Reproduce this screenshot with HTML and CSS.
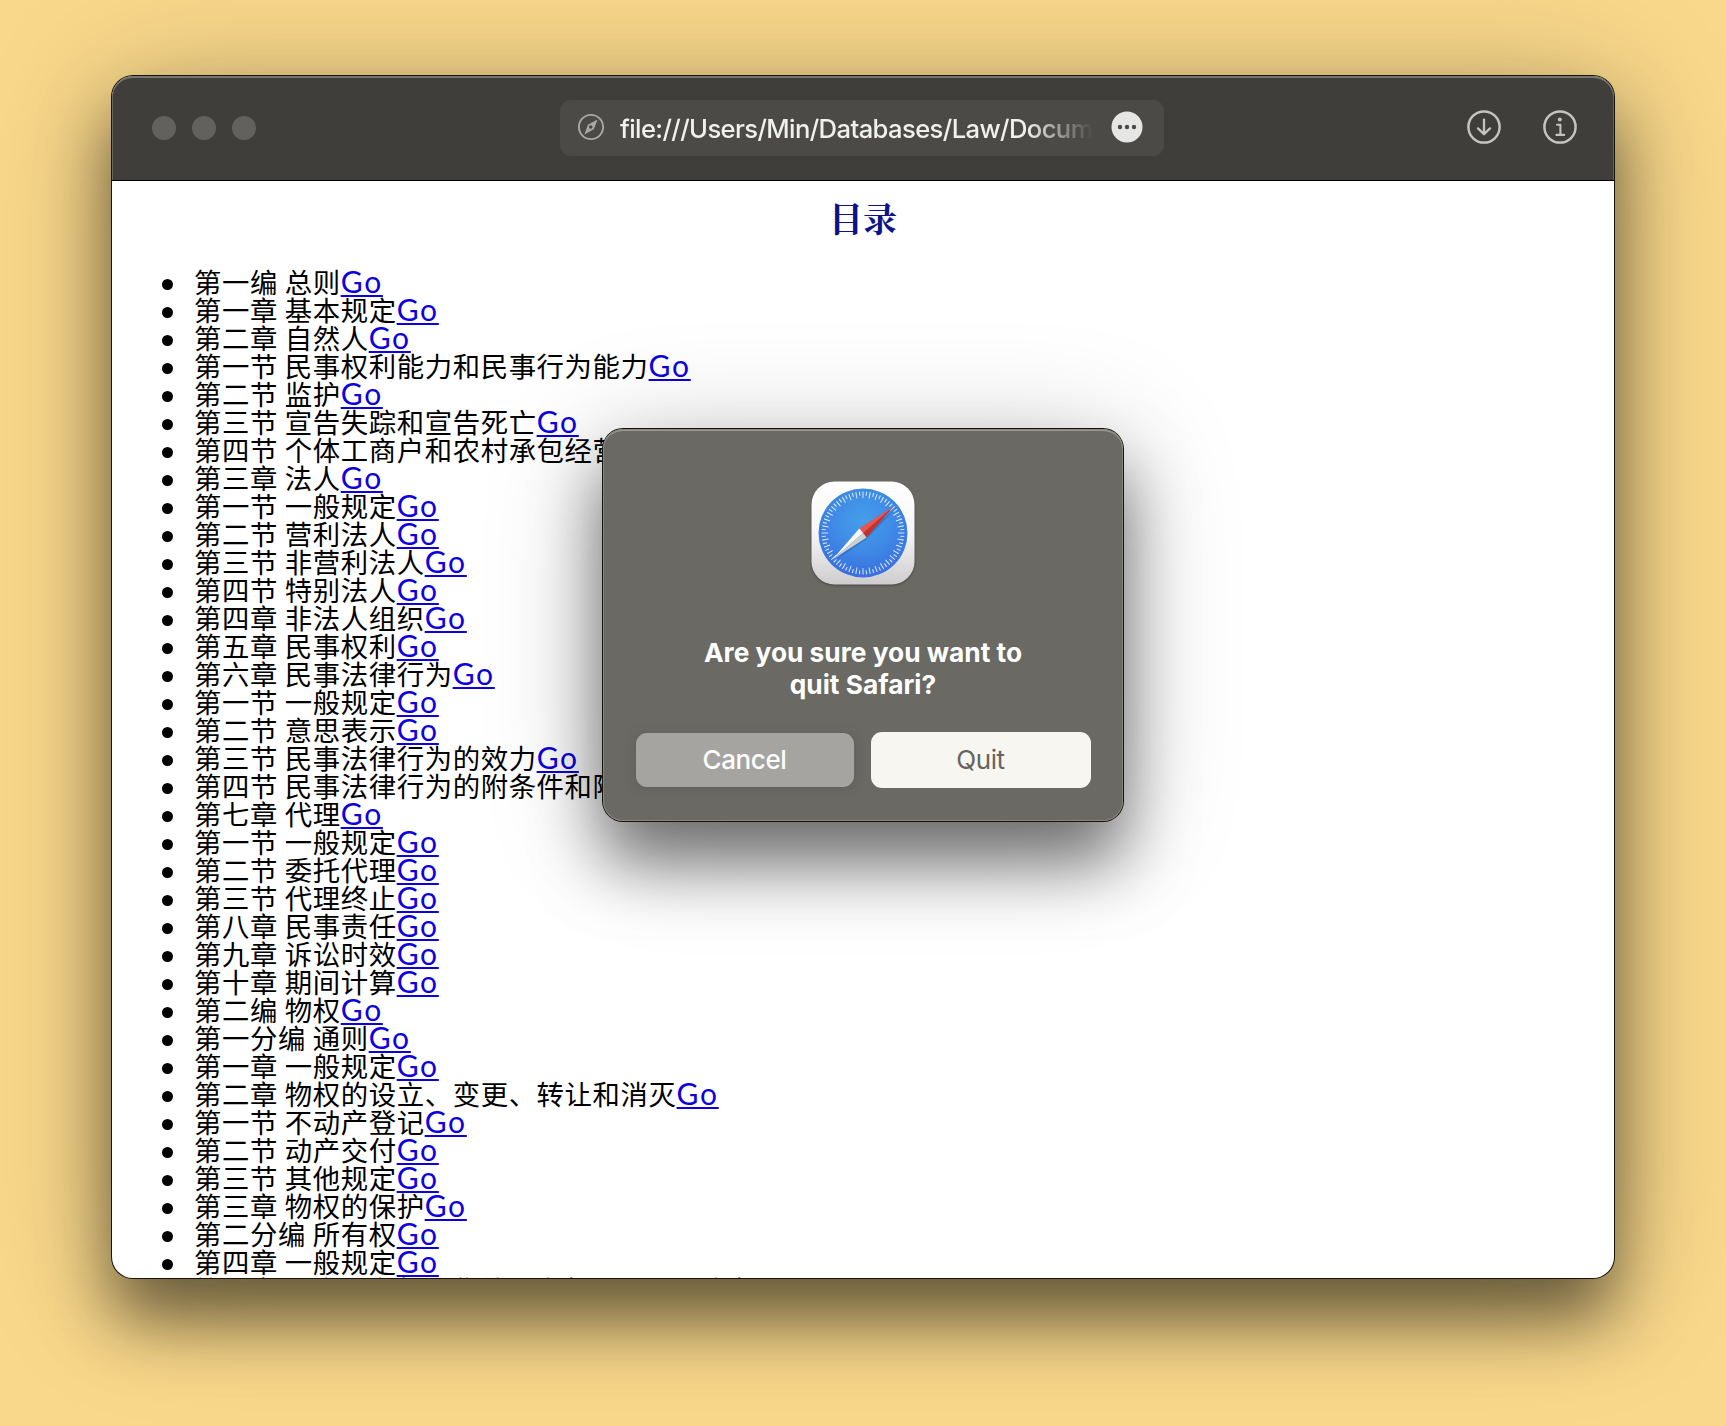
FILE: index.html
```html
<!DOCTYPE html>
<html lang="zh-CN">
<head>
<meta charset="utf-8">
<title>目录</title>
<link rel="stylesheet" href="styles.css">
</head>
<body>
<main class="window">
  <header class="toolbar">
    <div class="lights"><i></i><i></i><i></i></div>
    <div class="address">
      <svg class="compass" viewBox="0 0 28 28" width="28" height="28"><circle cx="14" cy="14" r="12.1" fill="none" stroke="currentColor" stroke-width="1.9"/><path fill="currentColor" fill-rule="evenodd" d="M20.6 6.4 10.9 11.7 7.4 21.6 16.8 16.2ZM13.7 12.2a1.8 1.8 0 1 1 0 3.6 1.8 1.8 0 0 1 0-3.6Z"/></svg>
      <span class="url">file:///Users/Min/Databases/Law/Docum</span>
      <svg class="more" viewBox="0 0 32 32" width="32" height="32"><circle cx="16" cy="16" r="15.5" fill="#e6e6e5"/><g fill="#4b4a46"><circle cx="9" cy="16" r="2.2"/><circle cx="16" cy="16" r="2.2"/><circle cx="23" cy="16" r="2.2"/></g></svg>
    </div>
    <div class="actions">
      <svg viewBox="0 0 36 36" width="36" height="36" fill="none" stroke="currentColor" stroke-width="2.5"><circle cx="18" cy="18" r="15.6"/><path stroke-width="2.3" stroke-linecap="round" stroke-linejoin="round" d="M18 10.6V25M12 19.4l6 5.8 6-5.8"/></svg>
      <svg viewBox="0 0 36 36" width="36" height="36" fill="none" stroke="currentColor" stroke-width="2.5"><circle cx="18" cy="18" r="15.6"/><circle cx="17.8" cy="10.4" r="2" fill="currentColor" stroke="none"/><path stroke-width="2.1" stroke-linecap="round" stroke-linejoin="round" d="M15 15.7h3.4v10M14.4 25.9h7.8"/></svg>
    </div>
  </header>
  <section class="page">
    <h1>目录</h1>
    <ul class="toc">
      <li>第一编 总则<a href="#">Go</a></li>
      <li>第一章 基本规定<a href="#">Go</a></li>
      <li>第二章 自然人<a href="#">Go</a></li>
      <li>第一节 民事权利能力和民事行为能力<a href="#">Go</a></li>
      <li>第二节 监护<a href="#">Go</a></li>
      <li>第三节 宣告失踪和宣告死亡<a href="#">Go</a></li>
      <li>第四节 个体工商户和农村承包经营户<a href="#">Go</a></li>
      <li>第三章 法人<a href="#">Go</a></li>
      <li>第一节 一般规定<a href="#">Go</a></li>
      <li>第二节 营利法人<a href="#">Go</a></li>
      <li>第三节 非营利法人<a href="#">Go</a></li>
      <li>第四节 特别法人<a href="#">Go</a></li>
      <li>第四章 非法人组织<a href="#">Go</a></li>
      <li>第五章 民事权利<a href="#">Go</a></li>
      <li>第六章 民事法律行为<a href="#">Go</a></li>
      <li>第一节 一般规定<a href="#">Go</a></li>
      <li>第二节 意思表示<a href="#">Go</a></li>
      <li>第三节 民事法律行为的效力<a href="#">Go</a></li>
      <li>第四节 民事法律行为的附条件和附期限<a href="#">Go</a></li>
      <li>第七章 代理<a href="#">Go</a></li>
      <li>第一节 一般规定<a href="#">Go</a></li>
      <li>第二节 委托代理<a href="#">Go</a></li>
      <li>第三节 代理终止<a href="#">Go</a></li>
      <li>第八章 民事责任<a href="#">Go</a></li>
      <li>第九章 诉讼时效<a href="#">Go</a></li>
      <li>第十章 期间计算<a href="#">Go</a></li>
      <li>第二编 物权<a href="#">Go</a></li>
      <li>第一分编 通则<a href="#">Go</a></li>
      <li>第一章 一般规定<a href="#">Go</a></li>
      <li>第二章 物权的设立、变更、转让和消灭<a href="#">Go</a></li>
      <li>第一节 不动产登记<a href="#">Go</a></li>
      <li>第二节 动产交付<a href="#">Go</a></li>
      <li>第三节 其他规定<a href="#">Go</a></li>
      <li>第三章 物权的保护<a href="#">Go</a></li>
      <li>第二分编 所有权<a href="#">Go</a></li>
      <li>第四章 一般规定<a href="#">Go</a></li>
      <li>第五章 国家所有权和集体所有权、私人所有权<a href="#">Go</a></li>
    </ul>
  </section>
</main>

<div class="dialog" role="alertdialog">
  <svg class="app-icon" viewBox="0 0 104 104" width="104" height="104">
    <defs>
      <linearGradient id="plate" x1="0" y1="0" x2="0" y2="1"><stop offset="0" stop-color="#fff"/><stop offset=".5" stop-color="#f6f6f6"/><stop offset="1" stop-color="#cfcccd"/></linearGradient>
      <linearGradient id="rim" x1="0" y1="0" x2="0" y2="1"><stop offset="0" stop-color="#3c8fd6"/><stop offset="1" stop-color="#3a70e4"/></linearGradient>
      <radialGradient id="dial" cx=".5" cy=".35" r=".65"><stop offset="0" stop-color="#459fea"/><stop offset=".55" stop-color="#3f8ae6"/><stop offset="1" stop-color="#3a6fdf"/></radialGradient>
    </defs>
    <rect x=".5" y=".5" width="103" height="103" rx="23" fill="url(#plate)"/>
    <circle cx="52" cy="52" r="44.5" fill="url(#rim)"/>
    <circle cx="52" cy="52" r="43" fill="url(#dial)"/>
    <g fill="none" stroke="#e8f3fd" stroke-opacity=".88">
      <circle cx="52" cy="52" r="38.2" stroke-width="6.4" pathLength="360" stroke-dasharray="1.6 8.4" stroke-dashoffset=".8"/>
      <circle cx="52" cy="52" r="39.4" stroke-width="4" pathLength="360" stroke-dasharray="1.6 8.4" stroke-dashoffset="5.8"/>
    </g>
    <path d="M85 27 55.8 58 23 80Z" fill="#174a9c" opacity=".35"/>
    <path d="M82.5 25.5 48.3 47.5 52 52Z" fill="#ef5248"/>
    <path d="M82.5 25.5 55.6 56.5 52 52Z" fill="#c4322d"/>
    <path d="M21.5 78.5 48.3 47.5 52 52Z" fill="#fbfafa"/>
    <path d="M21.5 78.5 55.6 56.5 52 52Z" fill="#cfcfd1"/>
  </svg>
  <p class="message">Are you sure you want to<br>quit Safari?</p>
  <div class="buttons">
    <button class="cancel">Cancel</button>
    <button class="quit">Quit</button>
  </div>
</div>
</body>
</html>
```
FILE: styles.css
```css
* { box-sizing: border-box; }

body {
  margin: 0;
  width: 1726px;
  height: 1426px;
  overflow: hidden;
  background: #f9d88b;
  padding: 76px 112px 0;
  font-family: Inter, "Noto Sans CJK SC", sans-serif;
}

.window {
  width: 1502px;
  height: 1202px;
  display: flex;
  flex-direction: column;
  overflow: hidden;
  border-radius: 21px;
  background: #fff;
  box-shadow: 0 0 0 1px #17130a, 0 42px 66px rgba(0, 0, 0, .5), 0 14px 130px rgba(0, 0, 0, .25);
}

.toolbar {
  flex: none;
  height: 105px;
  display: grid;
  grid-template-columns: 1fr 604px 1fr;
  padding: 0 36px 0 40px;
  background: #3f3e3a;
  border-bottom: 1px solid #000;
  border-radius: 21px 21px 0 0;
  box-shadow: inset 0 2px 0 #77766f, inset 1px 0 0 #66655f, inset -1px 0 0 #66655f;
}

.lights { display: flex; gap: 16px; padding-top: 40px; }
.lights i { width: 24px; height: 24px; border-radius: 50%; background: #62615d; }

.address {
  height: 56px;
  margin: 24px 0 0 -3px;
  width: 604px;
  display: flex;
  align-items: center;
  padding: 0 20px 2px 17px;
  border-radius: 11px;
  background: #4b4a46;
}
.compass { color: #a9a8a5; flex: none; }
.url {
  width: 473px;
  margin: 4px 18px 0 15px;
  overflow: hidden;
  white-space: nowrap;
  color: #f0f0ee;
  font-size: 25.6px;
  font-weight: 450;
  line-height: 36px;
  letter-spacing: -.6px;
  -webkit-mask-image: linear-gradient(90deg, #000 86%, transparent 100%);
  mask-image: linear-gradient(90deg, #000 86%, transparent 100%);
}
.more { flex: none; }

.actions {
  display: flex;
  justify-content: flex-end;
  gap: 40px;
  padding-top: 33px;
  color: #c4c3c0;
}

.page { flex: 1; overflow: hidden; }

h1 {
  margin: 13px 0 25px;
  height: 48px;
  text-align: center;
  color: #0b1486;
  font: 700 34px/48px "Noto Serif CJK SC", "Noto Sans CJK SC", serif;
}

.toc {
  margin: 0;
  padding: 0 0 0 50px;
  list-style: none;
  font-family: "Noto Sans CJK SC", sans-serif;
  font-size: 27.4px;
  letter-spacing: .6px;
  color: #000;
}
.toc li {
  height: 28px;
  line-height: 28px;
  white-space: nowrap;
}
.toc li::before {
  content: "";
  display: inline-block;
  width: 11px;
  height: 11px;
  margin-right: 21px;
  border-radius: 50%;
  background: #000;
  vertical-align: 3px;
}
.toc a {
  color: #0c00e0;
  font-family: Lato, sans-serif;
  font-size: 30px;
  line-height: 28px;
  letter-spacing: 1.7px;
  text-decoration-thickness: 2px;
  text-underline-offset: 2px;
}

.dialog {
  position: absolute;
  left: 603px;
  top: 429px;
  width: 520px;
  height: 392px;
  display: flex;
  flex-direction: column;
  align-items: center;
  padding: 52px 32px 0;
  border-radius: 20px;
  background: #6a6964;
  box-shadow: inset 0 0 0 1px #85847f, inset 0 2px 0 #999893, 0 0 0 1px #15140f, 0 42px 66px rgba(0, 0, 0, .5), 0 14px 120px rgba(0, 0, 0, .22);
}
.app-icon { flex: none; filter: drop-shadow(0 1px 1px rgba(0, 0, 0, .35)); }

.message {
  margin: 52px 0 0;
  color: #fff;
  text-align: center;
  font-size: 26.3px;
  font-weight: 700;
  line-height: 32px;
  white-space: nowrap;
}

.buttons { display: flex; align-items: center; gap: 17px; margin-top: 31px; }
.buttons button {
  border: 0;
  padding: 0 0 2px;
  border-radius: 11px;
  font-family: Inter, sans-serif;
  font-size: 26px;
  letter-spacing: -.4px;
}
.cancel {
  width: 218px;
  height: 54px;
  background: #a5a4a0;
  color: #fff;
  font-weight: 500;
  box-shadow: 0 1px 10px rgba(90, 86, 92, .5);
}
.quit { width: 220px; height: 56px; background: #f7f6f1; color: #656460; }
```
